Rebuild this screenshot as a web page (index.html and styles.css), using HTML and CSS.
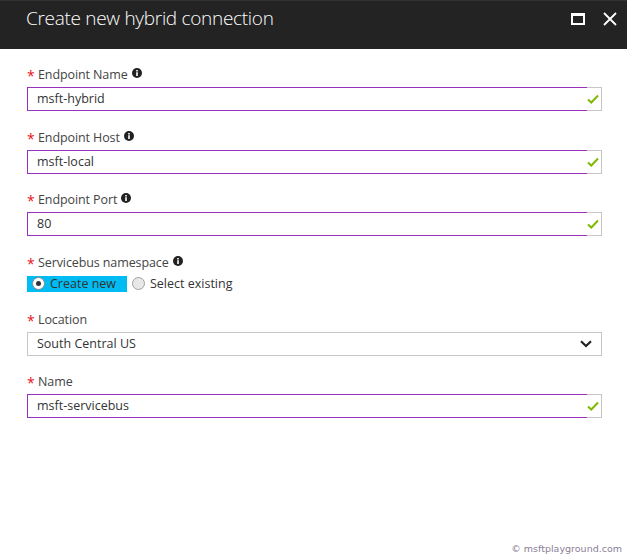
FILE: index.html
```html
<!DOCTYPE html>
<html>
<head>
<meta charset="utf-8">
<link rel="stylesheet" href="styles.css">
</head>
<body>
<div class="blade">
  <header class="header">
    <h1 class="title">Create new hybrid connection</h1>
    <div class="actions">
      <span class="max-icon"></span>
      <svg class="close-icon" width="14" height="14" viewBox="0 0 14 14"><path d="M1 1 L13 13 M13 1 L1 13" stroke="#fff" stroke-width="1.8" fill="none"/></svg>
    </div>
  </header>
  <main class="form">
    <div class="field">
      <div class="label"><span class="req">*</span>Endpoint Name<svg class="info" width="10" height="10" viewBox="0 0 10 10"><circle cx="5" cy="5" r="5" fill="#222"/><rect x="4.2" y="4.2" width="1.6" height="3.8" fill="#fff"/><rect x="4.2" y="2" width="1.6" height="1.5" fill="#fff"/></svg></div>
      <div class="input"><div class="value">msft-hybrid</div><div class="check"><svg width="12" height="10" viewBox="0 0 12 10"><path d="M1 5.5 L4.3 8.5 L11 1.5" stroke="#7fba00" stroke-width="2" fill="none"/></svg></div></div>
    </div>
    <div class="field">
      <div class="label"><span class="req">*</span>Endpoint Host<svg class="info" width="10" height="10" viewBox="0 0 10 10"><circle cx="5" cy="5" r="5" fill="#222"/><rect x="4.2" y="4.2" width="1.6" height="3.8" fill="#fff"/><rect x="4.2" y="2" width="1.6" height="1.5" fill="#fff"/></svg></div>
      <div class="input"><div class="value">msft-local</div><div class="check"><svg width="12" height="10" viewBox="0 0 12 10"><path d="M1 5.5 L4.3 8.5 L11 1.5" stroke="#7fba00" stroke-width="2" fill="none"/></svg></div></div>
    </div>
    <div class="field">
      <div class="label"><span class="req">*</span>Endpoint Port<svg class="info" width="10" height="10" viewBox="0 0 10 10"><circle cx="5" cy="5" r="5" fill="#222"/><rect x="4.2" y="4.2" width="1.6" height="3.8" fill="#fff"/><rect x="4.2" y="2" width="1.6" height="1.5" fill="#fff"/></svg></div>
      <div class="input"><div class="value">80</div><div class="check"><svg width="12" height="10" viewBox="0 0 12 10"><path d="M1 5.5 L4.3 8.5 L11 1.5" stroke="#7fba00" stroke-width="2" fill="none"/></svg></div></div>
    </div>
    <div class="field field-radio">
      <div class="label"><span class="req">*</span>Servicebus namespace<svg class="info" width="10" height="10" viewBox="0 0 10 10"><circle cx="5" cy="5" r="5" fill="#222"/><rect x="4.2" y="4.2" width="1.6" height="3.8" fill="#fff"/><rect x="4.2" y="2" width="1.6" height="1.5" fill="#fff"/></svg></div>
      <div class="radios">
        <div class="radio selected"><span class="dot on"></span>Create new</div>
        <div class="radio"><span class="dot"></span>Select existing</div>
      </div>
    </div>
    <div class="field">
      <div class="label"><span class="req">*</span>Location</div>
      <div class="select"><span>South Central US</span><svg width="12" height="8" viewBox="0 0 12 8"><path d="M1 1.2 L6 6 L11 1.2" stroke="#222" stroke-width="2.2" fill="none"/></svg></div>
    </div>
    <div class="field">
      <div class="label"><span class="req">*</span>Name</div>
      <div class="input"><div class="value">msft-servicebus</div><div class="check"><svg width="12" height="10" viewBox="0 0 12 10"><path d="M1 5.5 L4.3 8.5 L11 1.5" stroke="#7fba00" stroke-width="2" fill="none"/></svg></div></div>
    </div>
  </main>
  <div class="watermark">© msftplayground.com</div>
</div>
</body>
</html>
```
FILE: styles.css
```css
* { box-sizing: border-box; }
html, body { margin: 0; padding: 0; background: #fff; }
body { font-family: "Open Sans", "Noto Sans", sans-serif; width: 627px; height: 556px; overflow: hidden; }
.blade { position: relative; height: 556px; }
.header {
  height: 49px;
  background: #232323;
  border-top: 1px solid #333;
  display: flex;
  align-items: flex-start;
  justify-content: space-between;
  padding: 4px 10px 0 26px;
}
.title {
  margin: 0;
  color: #fff;
  font-weight: 300;
  font-size: 19px;
  line-height: 26px;
  letter-spacing: -0.3px;
}
.actions { display: flex; align-items: center; gap: 18px; margin-top: 7px; }
.max-icon {
  width: 14px; height: 12px;
  border: 2px solid #fff;
  border-top-width: 3px;
}
.form { padding: 17px 25px 0 27px; display: flex; flex-direction: column; }
.field { display: flex; flex-direction: column; margin-bottom: 17.5px; }
.label {
  height: 17px;
  line-height: 17px;
  font-size: 12.5px;
  color: #444;
  display: flex;
  align-items: center;
  margin-bottom: 4px;
  letter-spacing: -0.1px;
}
.req { color: #e81123; width: 11px; font-size: 14px; line-height: 17px; padding-top: 2px; }
.info { margin-left: 4px; margin-top: -3px; }
.input { display: flex; height: 24px; }
.value {
  flex: 1;
  border: 1px solid #9a30bc;
  border-right: none;
  padding-left: 9px;
  font-size: 12.5px;
  line-height: 21px;
  color: #333;
}
.check {
  width: 15px;
  border: 1px solid #c6c6c6;
  border-left: none;
  display: flex;
  align-items: center;
  justify-content: center;
  padding-right: 2px;
}
.select {
  height: 24px;
  border: 1px solid #c6c6c6;
  display: flex;
  align-items: center;
  justify-content: space-between;
  padding: 0 9px 0 9px;
  font-size: 12.5px;
  color: #333;
}
.field-radio { margin-bottom: 19px; }
.field-radio .label { margin-bottom: 5px; }
.radios { display: flex; height: 16px; align-items: center; }
.radio {
  display: flex;
  align-items: center;
  height: 16px;
  font-size: 12.5px;
  color: #333;
  padding-left: 5px;
}
.radio.selected { background: #00bcf2; width: 100px; }
.dot {
  width: 13px; height: 13px;
  border-radius: 50%;
  border: 1px solid #a0a0a0;
  background: #e8e8e8;
  margin-right: 5px;
  position: relative;
}
.dot.on { background: #fff; border-color: #888; }
.dot.on::after {
  content: "";
  position: absolute;
  left: 3px; top: 3px;
  width: 5px; height: 5px;
  border-radius: 50%;
  background: #333;
}
.watermark {
  position: absolute;
  right: 5px;
  bottom: 2px;
  font-family: "DejaVu Sans", sans-serif;
  font-size: 9.5px;
  color: #8a7e97;
}
```
